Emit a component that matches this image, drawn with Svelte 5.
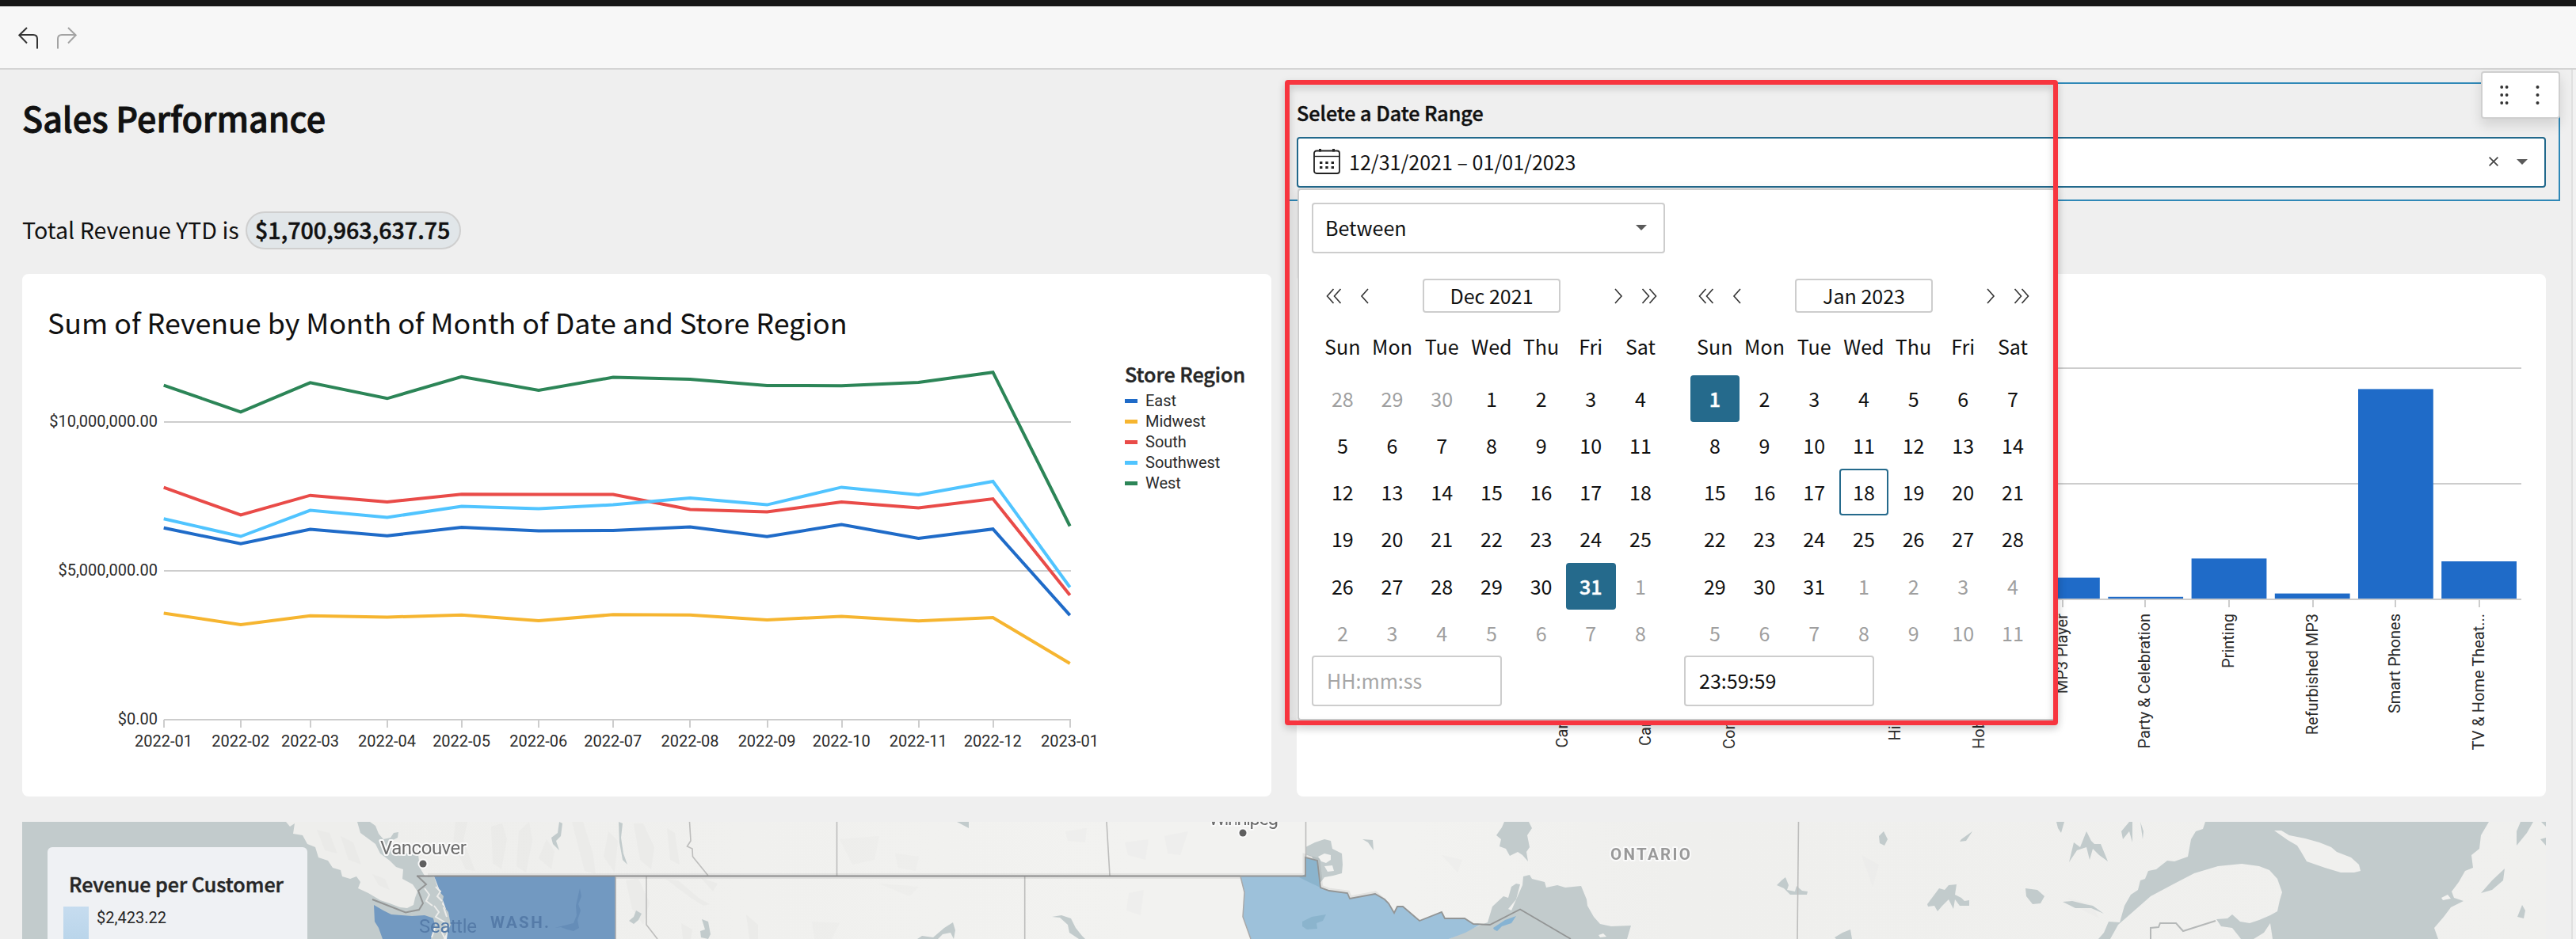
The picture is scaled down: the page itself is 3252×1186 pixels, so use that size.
<script>
  const DAY = 1144 / 365;
  const monthDays = [0, 31, 59, 90, 120, 151, 181, 212, 243, 273, 304, 334, 365];
  const monthLabels = ['2022-01', '2022-02', '2022-03', '2022-04', '2022-05', '2022-06', '2022-07', '2022-08', '2022-09', '2022-10', '2022-11', '2022-12', '2023-01'];
  const tickX = monthDays.map((d) => 207 + d * DAY);

  const series = [
    { name: 'East', color: '#1f6bc8', y: [666.8, 686.8, 668.6, 676.8, 666, 670.5, 669.9, 665.6, 677.8, 662.6, 680, 668.2, 777.1] },
    { name: 'Midwest', color: '#f6b530', y: [774.4, 788.9, 777.8, 779.5, 776.7, 784.1, 776.3, 776.7, 783, 778.4, 784.3, 780.1, 838] },
    { name: 'South', color: '#e94b48', y: [615.7, 650.5, 625.7, 633.9, 624.2, 624.6, 624.6, 643.5, 646.6, 634, 641.4, 630.1, 751.8] },
    { name: 'Southwest', color: '#50c4ff', y: [655.3, 677.5, 644.6, 653.5, 639.4, 642.4, 637.6, 628.9, 637.6, 615.4, 625, 608, 741.7] },
    { name: 'West', color: '#2c8557', y: [486.6, 520.3, 483.3, 503.3, 475.9, 492.9, 476.6, 478.9, 486.9, 487.2, 483, 470.2, 664.5] }
  ];
  const points = (s) => s.y.map((v, i) => `${(206.7 + monthDays[i] * DAY).toFixed(1)},${v}`).join(' ');
  const yAxis = [
    { y: 533, label: '$10,000,000.00' },
    { y: 721, label: '$5,000,000.00' },
    { y: 909, label: '$0.00' }
  ];

  const bars = [
    { x: 2556, top: 729.6, tick: 2604, label: 'MP3 Player' },
    { x: 2661.3, top: 753.8, tick: 2708, label: 'Party & Celebration' },
    { x: 2766.6, top: 705.4, tick: 2814, label: 'Printing' },
    { x: 2871.8, top: 749.6, tick: 2920, label: 'Refurbished MP3' },
    { x: 2977, top: 491.4, tick: 3024, label: 'Smart Phones' },
    { x: 3082.2, top: 709, tick: 3130, label: 'TV & Home Theat...' }
  ];
  const coveredLabels = [
    { x: 1979.3, y: 944.5, label: 'Car Audio' },
    { x: 2084.3, y: 942, label: 'Cameras' },
    { x: 2189.5, y: 946, label: 'Computers' },
    { x: 2399, y: 935.5, label: 'Hi-Fi' },
    { x: 2505, y: 946, label: 'Hobbies' }
  ];

  const weekdays = ['Sun', 'Mon', 'Tue', 'Wed', 'Thu', 'Fri', 'Sat'];
  const range = (a, b) => Array.from({ length: b - a + 1 }, (_, i) => a + i);
  const days = (before, count, after, picked, today) => [
    ...before.map((n) => ({ n, out: true })),
    ...range(1, count).map((n) => ({ n, picked: n === picked, today: n === today })),
    ...range(1, after).map((n) => ({ n, out: true }))
  ];
  const months = [
    { title: 'Dec 2021', time: '', cells: days([28, 29, 30], 31, 8, 31, 0) },
    { title: 'Jan 2023', time: '23:59:59', cells: days([], 31, 11, 1, 18) }
  ];
</script>

<div class="app">
  <div class="strip"></div>
  <header class="toolbar">
    <svg width="25" height="28" viewBox="0 0 25 28" fill="none" stroke="#333" stroke-width="2">
      <path d="M11 1 1.3 10.5 11 20.5M1.5 10H19q5 0 5 5V27.500" />
    </svg>
    <svg class="redo" width="25" height="28" viewBox="0 0 25 28" fill="none" stroke="#a3a3a3" stroke-width="2">
      <path d="M14 1 23.700 10.500 14 20.500M23.500 10H6Q1 10 1 15V27.500" />
    </svg>
  </header>

  <div class="workspace">
    <main>
      <section class="intro">
        <h1>Sales Performance</h1>
        <p class="total"><span>Total Revenue YTD is</span><b class="pill">$1,700,963,637.75</b></p>
      </section>

      <section class="filter">
        <div class="selection"></div>
        <h2>Selete a Date Range</h2>
        <div class="field">
          <svg width="34" height="32" viewBox="0 0 34 32" fill="none" stroke="#222" stroke-width="1.8">
            <rect x="1" y="2.500" width="32" height="28.500" rx="3" />
            <path d="M1 9.500H33" stroke-width="1.400" />
            <path d="M8.500 0V3.500M25.500 0V3.500" stroke-width="3" />
            <path d="M8 17.500h3.400M15.300 17.500h3.400M22.600 17.500h3.400M8 23.500h3.400M15.300 23.500h3.400M22.600 23.500h3.400" stroke-width="3.200" />
          </svg>
          <span class="value">12/31/2021 – 01/01/2023</span>
          <svg class="clear" width="12" height="12" viewBox="0 0 12 12" stroke="#444" stroke-width="1.7"><path d="M.6.6 11.400 11.400M11.400.6.6 11.400" /></svg>
          <svg class="caret" width="14" height="7" viewBox="0 0 14 7"><path d="M0 0H14L7 7Z" fill="#5a5a5a" /></svg>
        </div>

        <div class="panel">
          <div class="select">
            <span>Between</span>
            <svg width="14" height="7" viewBox="0 0 14 7"><path d="M0 0H14L7 7Z" fill="#5a5a5a" /></svg>
          </div>
          <div class="months">
            {#each months as m}
              <div class="month">
                <div class="nav">
                  <svg width="54" height="20" viewBox="0 0 54 20" fill="none" stroke="#333" stroke-width="1.600">
                    <path d="M9.500 1 1.500 10 9.500 19M18.500 1 10.500 10 18.500 19M53 1 45 10 53 19" />
                  </svg>
                  <div class="title">{m.title}</div>
                  <svg width="54" height="20" viewBox="0 0 54 20" fill="none" stroke="#333" stroke-width="1.600">
                    <path d="M1 1 9 10 1 19M35.500 1 43.500 10 35.500 19M44.500 1 52.500 10 44.500 19" />
                  </svg>
                </div>
                <div class="week">
                  {#each weekdays as w}<span>{w}</span>{/each}
                </div>
                <div class="days">
                  {#each m.cells as c}
                    <span class:out={c.out} class:picked={c.picked} class:today={c.today}>{c.n}</span>
                  {/each}
                </div>
                <div class="time" class:empty={!m.time}>{m.time || 'HH:mm:ss'}</div>
              </div>
            {/each}
          </div>
        </div>

        <div class="highlight"></div>

        <div class="actions">
          <svg width="11" height="26" viewBox="0 0 11 26" fill="#333">
            {#each [3, 13, 23] as y}<circle cx="2.200" cy={y} r="1.900" /><circle cx="8.600" cy={y} r="1.900" />{/each}
          </svg>
          <svg width="5" height="26" viewBox="0 0 5 26" fill="#333">
            {#each [3, 13, 23] as y}<circle cx="2.500" cy={y} r="2" />{/each}
          </svg>
        </div>
      </section>

      <section class="card lines">
        <h3>Sum of Revenue by Month of Month of Date and Store Region</h3>
        <div class="plot">
          <svg width="1350" height="530" viewBox="60 440 1350 530">
            {#each yAxis as t}
              <path d="M207 {t.y}H1352" class="grid" />
              <text x="199" y={t.y + 5.5} text-anchor="end">{t.label}</text>
            {/each}
            {#each tickX as x, i}
              <path d="M{Math.round(x)} 909V919" class="grid" />
              <text x={x - 0.5} y="943.300" text-anchor="middle">{monthLabels[i]}</text>
            {/each}
            {#each series as s}
              <polyline points={points(s)} fill="none" stroke={s.color} stroke-width="4" />
            {/each}
          </svg>
          <div class="legend">
            <h4>Store Region</h4>
            {#each series as s}
              <div class="entry"><i style="background:{s.color}"></i>{s.name}</div>
            {/each}
          </div>
        </div>
      </section>

      <section class="card">
        <svg width="1577" height="660" viewBox="1637 346 1577 660">
          <path d="M1740 465H3183M1740 611H3183" class="grid" />
          {#each bars as b}
            <rect x={b.x} y={b.top} width="94.800" height={756 - b.top} fill="#1f6bc8" />
            <path d="M{b.tick} 757V767" class="grid" />
            <text transform="translate({b.tick + 6.3} 775) rotate(-90)" text-anchor="end">{b.label}</text>
          {/each}
          <path d="M1740 757H3183" class="grid" />
          {#each coveredLabels as l}
            <text transform="translate({l.x} {l.y}) rotate(-90)">{l.label}</text>
          {/each}
        </svg>
      </section>

      <section class="map">
        <svg width="3186" height="148" viewBox="28 1038 3186 148">
          <defs>
            <linearGradient id="land" x1="0" x2="1">
              <stop offset="0" stop-color="#eeeeec" />
              <stop offset=".35" stop-color="#f2f2f0" />
              <stop offset=".48" stop-color="#f2f2f0" />
              <stop offset=".6" stop-color="#efefed" />
              <stop offset="1" stop-color="#f0f0ee" />
            </linearGradient>
          </defs>
          <rect x="28" y="1038" width="3186" height="148" fill="#c2cbcc" />

          <!-- mainland and Vancouver Island -->
          <path fill="url(#land)" d="M467 1038 474 1043 478 1053 484 1060 493 1058 497 1052 503 1051 502 1058 494 1062 504 1074 512 1078 528 1079 530 1096 536 1106 548 1108 553 1122 560 1134 556 1148 550 1163 544 1186H3214V1038Z" />
          <path fill="#eeeeec" d="M361 1038 366 1044 372 1040 370 1053 382 1055 388 1066 398 1070 402 1083 414 1087 420 1096 430 1099 432 1107 442 1110 450 1107 455 1114 452 1122 465 1128 480 1137 492 1141 505 1146 514 1147 522 1143 524 1134 527 1126 521 1117 508 1110 509 1098 500 1095 492 1087 480 1078 474 1066 455 1052 451 1038Z" />

          <!-- hill shading -->
          <g fill="#e8e8e6" opacity=".55">
            <path d="M575 1038 590 1038 585 1062 600 1100 588 1098 572 1066ZM620 1044 634 1040 640 1060 633 1098 622 1090ZM655 1050 668 1038 672 1062 664 1102 652 1094ZM690 1060 700 1075 696 1098 680 1084ZM722 1038 736 1038 748 1076 752 1104 738 1100ZM768 1050 780 1062 776 1102 762 1082ZM800 1040 812 1040 826 1070 822 1098 808 1086ZM842 1046 852 1052 858 1092 846 1086ZM400 1048 416 1052 426 1078 410 1074ZM430 1056 446 1064 456 1092 440 1086ZM470 1104 486 1110 492 1124 478 1118Z" />
            <path d="M790 1112 806 1110 820 1140 812 1168 798 1148ZM840 1110 856 1112 882 1134 896 1142 888 1144 872 1134ZM884 1108 906 1116 900 1126ZM942 1155 957 1168 957 1186 946 1186ZM860 1166 874 1174 872 1186 862 1186Z" />
            <path opacity=".5" d="M1060 1060 1110 1056 1104 1086 1076 1092ZM1130 1078 1160 1082 1156 1100 1134 1096ZM1345 1050 1372 1046 1370 1064 1348 1062ZM1420 1064 1450 1060 1446 1086 1424 1080ZM1470 1056 1500 1050 1490 1080 1474 1078ZM1425 1128 1444 1124 1440 1156 1422 1150ZM1025 1164 1060 1166 1050 1186 1028 1186ZM1110 1116 1160 1120 1148 1132ZM2350 1080 2372 1092 2364 1120ZM2610 1134 2640 1142 2650 1160 2630 1150ZM1820 1080 1846 1086 1840 1102Z" />
          </g>

          <!-- rivers and lakes -->
          <g fill="#c2cbcc">
            <path d="M706 1038 710 1040 708 1056 702 1062 706 1074 698 1066 696 1058 704 1052ZM781 1038 786 1040 784 1058 787 1078 792 1092 786 1086 782 1064ZM803 1150 810 1154 806 1162 800 1167 794 1163 800 1158ZM886 1161 894 1164 897 1180 894 1186 885 1184 884 1176 890 1174ZM1208 1038H1223V1046Z" />
            <path d="M1192 1172 1203 1165 1206 1175 1204 1186 1200 1178 1190 1180 1184 1186H1158L1164 1182 1178 1184ZM1328 1158 1340 1156 1352 1160 1358 1172 1366 1182 1370 1186H1362L1350 1178 1348 1168 1338 1159Z" />
            <path d="M1648 1070 1660 1064 1672 1060 1680 1062 1682 1072 1694 1078 1695 1092 1694 1103 1683 1106 1672 1108 1666 1116 1664 1096 1656 1082 1648 1079ZM1720 1060 1733 1061 1734 1074 1727 1064Z" />
            <path d="M1899 1038H1930L1934 1046 1928 1055 1931 1070 1927 1076 1929 1088 1922 1080 1916 1076 1906 1081 1901 1072 1893 1069 1895 1060 1889 1055 1896 1045Z" />
            <path d="M1829 1186 1860 1172 1878 1165 1884 1145 1898 1132 1904 1134 1908 1120 1914 1116 1919 1117 1914 1136 1904 1148 1908 1150 1922 1118 1923 1107 1931 1105 1934 1110 1950 1114 1952 1121 1966 1118 1976 1121 1996 1119 2003 1136 2004 1144 2012 1158 2020 1167 2034 1170 2059 1169 2054 1186Z" />
            <path d="M2372 1056 2378 1050 2383 1060 2379 1068 2373 1065ZM2476 1060 2490 1050 2482 1062 2474 1063ZM2596 1038H2606L2602 1052 2598 1046Z" />
            <path d="M2243 1118 2249 1112 2254 1108 2258 1118 2256 1124 2266 1126 2268 1119 2275 1125 2282 1126 2281 1130 2260 1130 2252 1122Z" />
            <path d="M2433 1142 2442 1130 2448 1122 2455 1124 2460 1118 2470 1117 2468 1130 2476 1134 2480 1138 2486 1137 2486 1144 2474 1144 2468 1136 2466 1148 2460 1136 2452 1144 2446 1151 2442 1144 2434 1145ZM2557 1122 2572 1124 2581 1132 2576 1141 2566 1142 2558 1132Z" />
            <path d="M2604 1139 2616 1138 2632 1142 2642 1144 2656 1154 2640 1147 2620 1147ZM2316 1184 2326 1178 2336 1174 2338 1186H2318Z" />
            <path d="M2634 1050 2640 1062 2644 1066 2652 1066 2661 1088 2650 1080 2642 1072 2638 1086 2634 1070 2622 1074 2612 1089 2618 1064 2626 1070ZM2688 1038H2692V1064L2688 1050 2680 1060 2678 1050ZM2702 1038 2706 1050 2705 1060Z" />
            <path d="M2784 1038 2781 1047 2772 1050 2766 1060 2762 1082 2745 1088 2736 1087 2722 1098 2712 1100 2708 1110 2702 1112 2699 1124 2690 1130 2682 1144 2676 1165 2662 1164 2656 1178 2649 1186H2664L2674 1168 2690 1154 2715 1132 2745 1116 2770 1103 2800 1094 2830 1091 2852 1094 2865 1099 2875 1110 2881 1127 2878 1137 2875 1151 2866 1156 2852 1162 2840 1166 2828 1164 2818 1155 2812 1160 2798 1161 2804 1170 2818 1172 2826 1182 2829 1186 2845 1186 2858 1178 2866 1166 2869 1186H3078L3073 1172 3085 1158 3094 1146 3110 1138 3098 1134 3095 1126 3104 1114 3112 1100 3122 1096 3120 1080 3130 1072 3132 1055 3142 1038Z" />
            <path d="M3177 1050 3182 1038H3198L3190 1052 3177 1068ZM3208 1038H3214V1044ZM3207 1060 3214 1058V1068ZM3162 1097 3160 1112 3146 1124 3132 1128 3146 1112ZM3184 1143 3188 1150 3186 1160 3178 1158Z" />
          </g>
          <path fill="#f0f0ee" d="M2871 1049 2880 1049 2890 1055 2910 1059 2928 1064 2943 1070 2950 1076 2968 1083 2978 1092 2980 1100 2972 1102 2955 1102 2935 1096 2912 1088 2905 1076 2900 1068 2888 1061Z" />
          <path fill="#f2f2f0" d="M1664 1082 1672 1078 1680 1080 1680 1086 1674 1090 1668 1088ZM1672 1094 1682 1093 1684 1100 1676 1101ZM2018 1181 2024 1179 2028 1183 2020 1184ZM3082 1134 3090 1130 3094 1135 3084 1137Z" />

          <!-- provinces and states -->
          <path d="M870.500 1038 872 1062 867.500 1069 874 1072 874.500 1082 894 1106M1056.500 1038V1106M1397 1038 1401 1106M1648.500 1038V1082M816 1106V1168L830 1186M1293.700 1106V1186M2270.500 1038 2269 1186M1796 1186 1802 1166" fill="none" stroke="#bdbdbc" stroke-width="1.600" />
          <path d="M2715 1186V1172L2725 1171 2727 1166H2747L2756 1176 2797 1163" fill="none" stroke="#b5b8b8" stroke-width="2" />
          <path d="M540 1106.500H1648V1082L1663 1087 1667 1121 1678 1125 1701 1128 1704 1135 1736 1129 1748 1139" fill="none" stroke="#000" stroke-opacity=".06" stroke-width="7" />

          <path fill="#7299c1" d="M548 1106.500H777V1186H564L566 1172 560 1160 563 1148 558 1134 554 1122ZM472 1143 484 1150 494 1155 520 1157 536 1156 548 1160 552 1172 546 1186H483L478 1172 473 1164Z" />
          <path fill="#5f88b3" opacity=".7" d="M732 1122 734 1132 730 1142 733 1150 729 1162 731 1172 724 1176 716 1174 708 1171 700 1172 712 1169 724 1166 728 1156 727 1144Z" />
          <path fill="#c2cbcc" d="M536 1108 548 1108 549 1120 560 1132 558 1142 566 1152 569 1168 560 1186H544L549 1168 546 1156 534 1152 532 1140 530 1126Z" />
          <path fill="none" stroke="#ececea" stroke-width="2" d="M536 1122 542 1130 538 1138 546 1144M550 1120 556 1126 552 1132 558 1138M548 1144 554 1152 550 1158 560 1164 566 1170 558 1178 562 1186M560 1146 564 1158M549 1172 545 1184" />
          <path fill="#9dc1da" d="M1566 1107H1648V1083L1663 1087 1667 1121 1678 1125 1701 1128 1704 1135 1736 1129 1748 1136 1753 1141 1760 1153 1764 1145 1771 1145 1792 1163 1820 1152 1824 1160 1849 1160 1860 1167 1870 1167 1850 1178 1829 1186H1579L1569 1158 1571 1127Z" />
          <path fill="#8bb4cd" d="M1648 1083 1663 1087 1667 1121 1652 1114 1640 1108 1648 1104ZM1644 1164 1656 1158 1674 1155 1670 1163 1662 1166 1663 1173 1650 1174 1644 1170Z" />
          <path fill="#86b3d3" d="M1885 1172 1900 1162 1914 1157 1908 1166 1896 1170 1890 1176 1886 1174Z" />

          <path d="M470 1136 512 1152.500 529 1149 534 1141 528 1125 538 1117 527 1106.500" fill="none" stroke="#939595" stroke-width="2" />
          <path d="M526 1106.500H1566" fill="none" stroke="#8c8c8c" stroke-width="2.200" />
          <path d="M1566 1106.500H1648V1083L1663 1087 1667 1121 1678 1125 1701 1128 1704 1135 1736 1129 1748 1136 1753 1141 1760 1153 1764 1145 1771 1145 1792 1163 1820 1152 1824 1160 1849 1160 1860 1167 1881 1168 1919 1148.500 1983 1186" fill="none" stroke="#939595" stroke-width="1.800" />
          <path d="M1566 1107 1571 1127 1569 1158 1579 1186M777 1107V1186" fill="none" stroke="#a9a9a9" stroke-width="1.500" />

          <g class="places">
            <text x="480" y="1079" class="city" textLength="109">Vancouver</text>
            <circle cx="534" cy="1091" r="4.500" />
            <text x="1526" y="1041.500" class="city" textLength="88">Winnipeg</text>
            <circle cx="1569" cy="1052" r="4.500" />
            <text x="2033" y="1086" class="region" textLength="101">ONTARIO</text>
            <text x="529" y="1178" class="city faded" textLength="73">Seattle</text>
            <text x="619" y="1172" class="region faded" textLength="74">WASH.</text>
          </g>
        </svg>
        <div class="scale">
          <h4>Revenue per Customer</h4>
          <div class="stop"><i></i><span>$2,423.22</span></div>
        </div>
      </section>
    </main>
    <aside></aside>
  </div>
</div>

<style>
  :global(body) { margin: 0; }
  .app {
    display: flex;
    flex-direction: column;
    width: 3252px;
    height: 1186px;
    overflow: hidden;
    background: #efefef;
    color: #111;
    font-family: "Noto Sans CJK SC", "Open Sans", sans-serif;
    font-size: 25.07px;
  }
  .app * { box-sizing: border-box; }
  h1, h2, h3, h4, p { margin: 0; font-weight: 500; white-space: nowrap; }
  h1 { -webkit-text-stroke: .9px; }
  h2, h4, .pill, .picked { -webkit-text-stroke: .5px; }
  svg { display: block; flex: none; }

  .strip { flex: none; height: 8px; background: #171717; }
  .toolbar {
    flex: none;
    display: flex;
    gap: 24px;
    height: 80px;
    padding: 26px 0 0 23px;
    background: #f7f7f7;
    border-bottom: 2px solid #d4d4d4;
  }
  .workspace { flex: 1; display: flex; min-height: 0; }
  aside { width: 6px; background: #f2f2f2; border-left: 2px solid #e0e0e0; }
  main {
    width: 3246px;
    display: grid;
    grid-template-columns: 1577px 1577px;
    grid-template-rows: 258px 660px 148px;
    column-gap: 32px;
    padding-left: 28px;
  }

  .intro { padding-top: 30px; }
  h1 { font-size: 43px; line-height: 60px; }
  .total {
    display: flex;
    align-items: center;
    height: 48px;
    margin-top: 89px;
    font-size: 28.65px;
    line-height: 44px;
    font-weight: 400;
  }
  .total span { position: relative; top: -1px; }
  .pill {
    margin-left: 8px;
    width: 272px;
    height: 48px;
    padding: 0 1px 2px 0;
    text-align: center;
    font-weight: 500;
    line-height: 42px;
    background: #e1e6e9;
    border: 2px solid #cfcfcf;
    border-radius: 24px;
  }

  .filter { position: relative; padding-top: 34px; z-index: 1; }
  .filter h2 { font-size: 25.07px; line-height: 40px; }
  .selection {
    position: absolute;
    left: -14px;
    top: 16px;
    width: 1609px;
    height: 150px;
    border: 2px solid #2f88b7;
  }
  .field {
    position: relative;
    display: flex;
    align-items: center;
    height: 64px;
    margin-top: 11px;
    padding: 0 21px 2px 19px;
    background: #fff;
    border: 2px solid #22698c;
    border-radius: 4px;
  }
  .value { flex: 1; margin-left: 11px; line-height: 56px; }
  .caret { margin-left: 23px; }

  .panel {
    position: absolute;
    left: 1px;
    top: 150px;
    width: 957px;
    height: 672px;
    padding: 16px;
    background: #fff;
    border: 2px solid #cdcdcd;
    border-radius: 4px;
    box-shadow: 0 4px 16px rgba(0, 0, 0, .12);
  }
  .select {
    display: flex;
    justify-content: space-between;
    align-items: center;
    width: 446px;
    height: 64px;
    padding: 0 21px 2px 15px;
    border: 2px solid #cdcdcd;
    border-radius: 4px;
    line-height: 56px;
  }
  .months { display: flex; gap: 24px; margin-top: 32px; }
  .month { width: 446px; }
  .nav {
    display: flex;
    align-items: center;
    justify-content: space-between;
    height: 43px;
    padding: 0 10px 0 18px;
  }
  .title {
    width: 174px;
    height: 43px;
    border: 2px solid #cdcdcd;
    border-radius: 4px;
    text-align: center;
    line-height: 38px;
  }
  .week, .days {
    display: grid;
    grid-template-columns: repeat(7, 62.7px);
    margin-left: 7.5px;
    text-align: center;
  }
  .week { margin-top: 12px; line-height: 60px; }
  .days { margin-top: 7px; grid-auto-rows: 59.15px; line-height: 58px; }
  .days span { border-radius: 4px; }
  .out { color: #9f9f9f; }
  .picked { background: #256a8c; color: #fff; font-weight: 500; }
  .today { border: 2px solid #256a8c; line-height: 54px; }
  .time {
    width: 240px;
    height: 64px;
    margin-top: -1px;
    padding-left: 17px;
    border: 2px solid #cdcdcd;
    border-radius: 4px;
    line-height: 58px;
  }
  .time.empty { color: #a6a6a6; }

  .highlight {
    position: absolute;
    left: -15px;
    top: 13px;
    width: 976px;
    height: 815px;
    border: 6px solid #f7353f;
    border-radius: 4px;
    filter: drop-shadow(0 4px 5px rgba(0, 0, 0, .2));
  }
  .actions {
    position: absolute;
    left: 1495px;
    top: 2px;
    display: flex;
    width: 100px;
    height: 60px;
    padding: 15px 0 0 22px;
    gap: 34px;
    background: #fff;
    border: 2px solid #cfcfcf;
    border-radius: 4px;
    box-shadow: 0 8px 16px rgba(0, 0, 0, .12);
  }

  .card { height: 660px; background: #fff; border-radius: 8px; overflow: hidden; }
  .lines { padding-left: 32px; }
  .lines h3 { height: 94px; padding-top: 30px; font-size: 35.8px; font-weight: 400; line-height: 60px; }
  .plot { display: flex; }
  .card text { font: 20px Roboto, sans-serif; fill: #2b2b2b; }
  .grid { fill: none; stroke: #cdcdcd; stroke-width: 2; }
  .legend { padding: 12px 0 0 10px; color: #2b2b2b; }
  .legend h4, .scale h4 { font-size: 25.07px; line-height: 40px; color: #262626; }
  .entry {
    display: flex;
    align-items: center;
    height: 26px;
    font: 20px/26px Roboto, sans-serif;
  }
  .legend h4 + .entry { margin-top: 1px; }
  .entry i { width: 16px; height: 5px; margin-right: 10px; }

  .map { grid-column: 1 / 3; position: relative; height: 148px; margin-top: 32px; overflow: hidden; }
  .places text { font-family: Roboto, sans-serif; paint-order: stroke; stroke: #fafafa; stroke-width: 4px; stroke-linejoin: round; }
  .places circle { fill: #5f5f5f; stroke: #fafafa; stroke-width: 4px; paint-order: stroke; }
  .city { font-size: 24px; fill: #6c6c6c; }
  .region { font-size: 20.5px; font-weight: 700; fill: #999; }
  .places .faded { fill: #557ba8; stroke: none; }
  .scale {
    position: absolute;
    left: 32px;
    top: 32px;
    width: 328px;
    height: 200px;
    padding: 26px 20px 0;
    background: #eff1f4;
    border-radius: 6px;
  }
  .scale h4 { padding-left: 7px; }
  .stop { display: flex; margin-top: 9px; font: 20px/28px Roboto, sans-serif; color: #262626; }
  .stop i { width: 32px; height: 120px; margin-right: 10px; background: linear-gradient(#c6dcef, #a3c8e2); }
</style>
